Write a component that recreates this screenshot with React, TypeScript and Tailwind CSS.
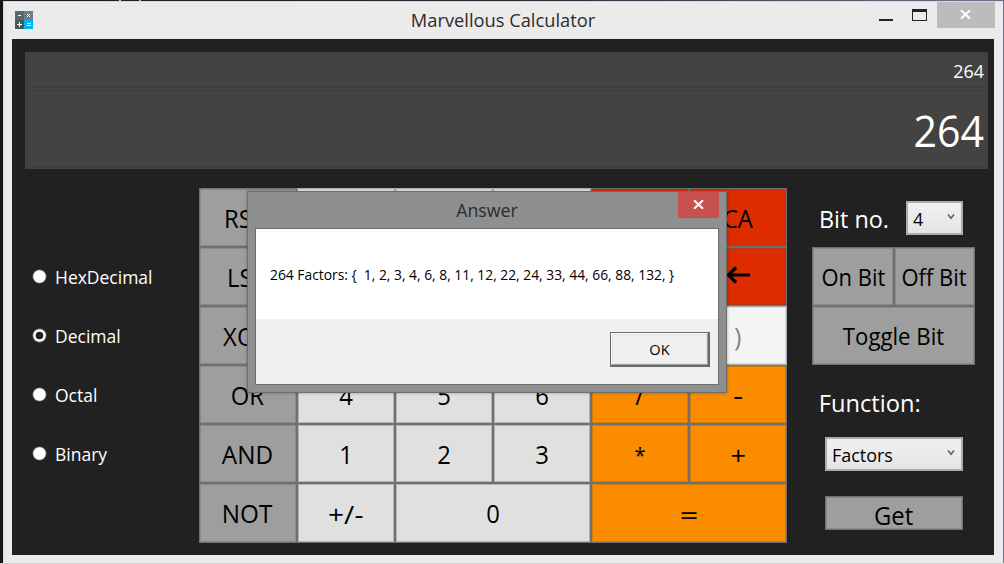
import type { ReactNode } from "react";

type Tone = "gray" | "light" | "red" | "white" | "orange";

const tones: Record<Tone, string> = {
  gray: "bg-[#9e9e9e] border-[#707070] inset-shadow-[0_0_0_1px_#8a8a8a] text-black",
  light: "bg-[#e0e0e0] border-[#707070] inset-shadow-[0_0_0_1px_#b4b4b4] text-black",
  red: "bg-[#dd2c00] border-[#707070] inset-shadow-[0_0_0_1px_#b43c14] text-black",
  white: "bg-[#f4f4f4] border-[#adb2b5] inset-shadow-[0_0_0_1px_#d5dadd] text-[#838383]",
  orange: "bg-[#fb8c00] border-[#707070] inset-shadow-[0_0_0_1px_#cf7d10] text-black",
};

function Label({ children, className = "" }: { children: ReactNode; className?: string }) {
  return <span className={`block whitespace-pre ${className}`}>{children}</span>;
}

function Key({
  tone,
  children,
  className = "",
  stretch = "scale-x-[0.955]",
}: {
  tone: Tone;
  children?: ReactNode;
  className?: string;
  stretch?: string;
}) {
  return (
    <button className={`flex items-center justify-center border text-[25px] leading-[30px] ${tones[tone]} ${className}`}>
      {children !== undefined && <Label className={stretch}>{children}</Label>}
    </button>
  );
}

function AppIcon() {
  return (
    <svg width="18" height="18" viewBox="0 0 18 18" shapeRendering="crispEdges">
      <rect width="9" height="9" fill="#5b686d" />
      <rect x="9" width="9" height="9" fill="#727d82" />
      <rect y="9" width="9" height="9" fill="#4b585d" />
      <rect x="9" y="9" width="9" height="9" fill="#00b4f5" />
      <path d="M3 4h3v1H3zM2 13h5v1H2zM4 11h1v5H4zM12 12h4v1h-4zM12 14h4v1h-4z" fill="#fff" />
      <path d="M12 3h1v1h-1zM14 3h1v1h-1zM13 4h1v1h-1zM12 5h1v1h-1zM14 5h1v1h-1z" fill="#fff" />
    </svg>
  );
}

function CloseGlyph() {
  return (
    <svg width="11" height="9" viewBox="0 0 11 9" className="-translate-y-px">
      <path d="M1 0.3 L10 8.7 M10 0.3 L1 8.7" stroke="#fff" strokeWidth="2.1" fill="none" />
    </svg>
  );
}

function Radio({ label, checked = false }: { label: string; checked?: boolean }) {
  return (
    <div className="flex h-[59px] items-center">
      <svg width="15" height="15" viewBox="0 0 15 15">
        <circle cx="7.5" cy="7.5" r="7" fill="#777" />
        <circle cx="7.5" cy="7.5" r="6.2" fill="#fff" />
        {checked && <circle cx="7.5" cy="7.5" r="3.8" fill="#212121" />}
      </svg>
      <Label className="ml-[7.5px] origin-left scale-x-[0.945] text-[18.5px] leading-6 text-white">{label}</Label>
    </div>
  );
}

function Combo({ value, className }: { value: string; className: string }) {
  return (
    <div className={`flex h-[34px] items-center justify-between border-2 border-[#acacac] bg-linear-to-b from-[#f0f0f0] to-[#e5e5e5] pl-[5px] pr-[6px] ${className}`}>
      <Label className="origin-left translate-y-px scale-x-[0.97] text-[18.5px] leading-6 text-black">{value}</Label>
      <svg width="8" height="6" viewBox="0 0 8 6" className="-translate-y-px">
        <path d="M1 0.5 L4 4.2 L7 0.5" fill="none" stroke="#606060" strokeWidth="1.6" />
      </svg>
    </div>
  );
}

function AnswerDialog() {
  return (
    <div className="absolute left-[247px] top-[191px] flex h-[202px] w-[480px] flex-col border border-[#6d6d6d] bg-[#8f8f8f] px-[7px] pb-[7px] shadow-[0_0_3px_rgba(0,0,0,0.3)]">
      <div className="grid h-9 grid-cols-[41px_1fr_41px]">
        <span />
        <Label className="scale-x-[0.96] pt-[6px] text-center text-[18.5px] leading-6 text-[#2b2b2b]">Answer</Label>
        <button className="flex h-[26px] items-center justify-center bg-[#c75050]">
          <CloseGlyph />
        </button>
      </div>
      <div className="flex flex-1 flex-col border border-[#6d6d6d] bg-[#f0f0f0]">
        <div className="flex h-[90px] items-center bg-white pl-[14px]">
          <Label className="origin-left scale-x-[0.922] text-[15px] leading-5 text-black">
            {"264 Factors: {  1, 2, 3, 4, 6, 8, 11, 12, 22, 24, 33, 44, 66, 88, 132, }"}
          </Label>
        </div>
        <div className="flex justify-end pr-2 pt-[13px]">
          <button className="h-[35px] w-[100px] border border-[#696969] bg-[#696969] pb-px pr-px">
            <span className="flex h-full items-center justify-center border border-b-[#a0a0a0] border-l-white border-r-[#a0a0a0] border-t-white bg-[#f0f0f0] inset-shadow-[0_0_0_1px_#e3e3e3]">
              <Label className="scale-x-[0.97] text-[15px] leading-5 text-black">OK</Label>
            </span>
          </button>
        </div>
      </div>
    </div>
  );
}

export default function App() {
  return (
    <div className="relative flex h-[564px] w-[1004px] flex-col overflow-hidden bg-[#ebebeb] font-['Open_Sans','Noto_Sans',sans-serif]">
      <div className="flex h-px shrink-0 bg-linear-to-r from-[#1c1820] via-[#2a2233] to-[#77708a]">
        <span className="ml-[119px] h-px w-[2px] bg-[#d8c8c8]" />
        <span className="ml-[18px] h-px w-[2px] bg-[#9ac8e8]" />
      </div>
      <div className="flex flex-1 border-b border-[#cfcfcf]">
        <div className="w-[3px] bg-[#14161c]" />
        <div className="flex flex-1 flex-col border-l border-t border-[#dcd6dc] pl-2 pr-[9px]">
          <header className="flex h-[37px] shrink-0">
            <div className="w-[115px] pl-[3px] pt-[9px]">
              <AppIcon />
            </div>
            <Label className="flex-1 scale-x-[0.988] pt-[6px] text-center text-[18.5px] leading-6 text-[#2b2b2b]">Marvellous Calculator</Label>
            <div className="flex">
              <div className="mr-[19px] mt-[17px] h-[2px] w-[14px] bg-[#222]" />
              <div className="mr-[10px] mt-[7px] h-3 w-[15px] border border-t-[3px] border-[#222]" />
              <button className="-mr-px flex h-[26px] w-[58px] items-center justify-center bg-[#bcbcbc] pr-[2px]">
                <CloseGlyph />
              </button>
            </div>
          </header>
          <main className="h-[516px] bg-[#212121] pl-[13px] pr-[6px] pt-[13px]">
            <section className="h-[117px] bg-[#434343] p-px text-right text-white">
              <div className="mb-[2px] h-[35px] border border-[#3c3c3c] pr-[2px] pt-[5px]">
                <Label className="origin-right scale-x-[0.96] text-[18.7px] leading-6">264</Label>
              </div>
              <div className="h-[78px] border border-[#3c3c3c] pr-[2px] pt-[9px]">
                <Label className="origin-right scale-x-[0.935] text-[44px] leading-[60px]">264</Label>
              </div>
            </section>
            <div className="flex">
              <div className="w-[174px] pl-[7px] pt-[78px]">
                <Radio label="HexDecimal" />
                <Radio label="Decimal" checked />
                <Radio label="Octal" />
                <Radio label="Binary" />
              </div>
              <section className="mt-[19px] grid w-[588px] grid-cols-6 grid-rows-[59px_59px_59px_59px_59px_60px]">
                <Key tone="gray" className="pr-[2px]">RSH</Key>
                <Key tone="white" />
                <Key tone="white" />
                <Key tone="white" />
                <Key tone="red" />
                <Key tone="red">CA</Key>
                <Key tone="gray" className="pl-px">LSH</Key>
                <Key tone="white" />
                <Key tone="white" />
                <Key tone="white" />
                <Key tone="red" />
                <Key tone="red">
                  <svg width="26" height="18" viewBox="0 0 26 18" className="-translate-y-[2px]">
                    <path d="M25.5 9H3" stroke="#000" strokeWidth="3" />
                    <path d="M11 1.5L3 9L11 16.5" fill="none" stroke="#000" strokeWidth="3.4" />
                  </svg>
                </Key>
                <Key tone="gray" className="pr-[2px]">XOR</Key>
                <Key tone="light" />
                <Key tone="light" />
                <Key tone="light" />
                <Key tone="white" />
                <Key tone="white">)</Key>
                <Key tone="gray" className="pr-[2px]">OR</Key>
                <Key tone="light">4</Key>
                <Key tone="light">5</Key>
                <Key tone="light">6</Key>
                <Key tone="orange">/</Key>
                <Key tone="orange" stretch="scale-x-[1.25]">-</Key>
                <Key tone="gray" className="pr-px" stretch="scale-x-[0.97]">AND</Key>
                <Key tone="light">1</Key>
                <Key tone="light">2</Key>
                <Key tone="light">3</Key>
                <Key tone="orange" stretch="scale-x-[0.8] scale-y-[0.85]">*</Key>
                <Key tone="orange" stretch="scale-x-[1.08] translate-y-px">+</Key>
                <Key tone="gray" className="pr-px" stretch="scale-x-[0.97]">NOT</Key>
                <Key tone="light" stretch="scale-x-[1.12] translate-y-px">+/-</Key>
                <Key tone="light" className="col-span-2">0</Key>
                <Key tone="orange" className="col-span-2" stretch="scale-x-[1.3] translate-y-[2px]">=</Key>
              </section>
              <section className="ml-[25px] flex w-[163px] flex-col pt-8">
                <div className="flex h-[34px] justify-between pl-[7px] pr-3">
                  <Label className="origin-left scale-x-[0.955] text-[24.5px] leading-9 text-white">Bit no.</Label>
                  <Combo value="4" className="w-[57px]" />
                </div>
                <div className="mt-3 grid grid-cols-[82px_81px] grid-rows-[59px_59px]">
                  <Key tone="gray" className="text-[23px]!">On Bit</Key>
                  <Key tone="gray" className="text-[23px]!">Off Bit</Key>
                  <Key tone="gray" className="col-span-2 text-[23px]!" stretch="scale-x-[0.965]">Toggle Bit</Key>
                </div>
                <Label className="mt-[20px] origin-left scale-x-[0.965] pl-[7px] text-[24.5px] leading-9 text-white">Function:</Label>
                <Combo value="Factors" className="ml-[13px] mt-4 w-[138px]" />
                <Key tone="gray" className="ml-[13px] mt-[25px] h-[34px] w-[138px] pt-[3px]">Get</Key>
              </section>
            </div>
          </main>
        </div>
        <div className="w-px bg-[#77717f]" />
      </div>
      <AnswerDialog />
    </div>
  );
}
